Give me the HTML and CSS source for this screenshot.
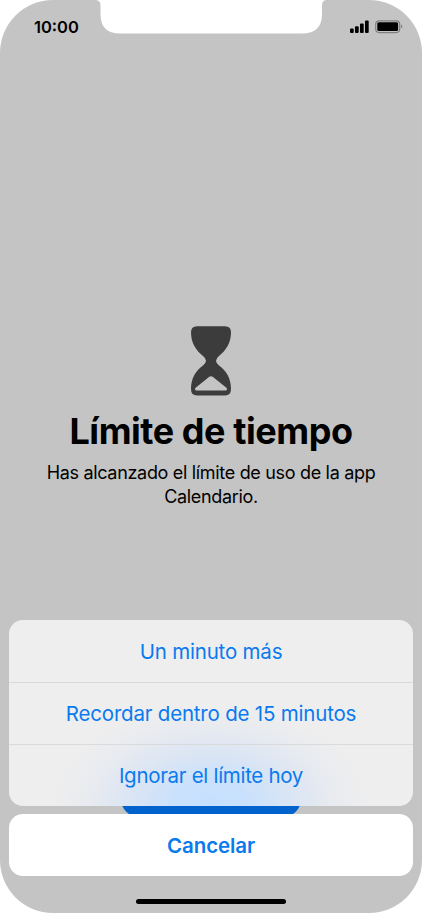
FILE: index.html
```html
<!DOCTYPE html>
<html lang="es">
<head>
<meta charset="utf-8">
<title>Límite de tiempo</title>
<link rel="stylesheet" href="styles.css">
</head>
<body>
<div class="phone">
  <svg class="notch" width="230" height="35" viewBox="0 0 230 35"><path fill="#fff" d="M0 0Q4.500 .8 4.500 5V14Q4.500 33.500 24 33.500H206Q226 33.500 226 14V5Q226 .8 230 0Z"/></svg>
  <header class="status">
    <span class="time">10:00</span>
    <svg class="indicators" width="53" height="14" viewBox="0 0 53 14">
      <rect x="0" y="8.500" width="3.700" height="4.500" rx="1"/>
      <rect x="5" y="6.200" width="3.700" height="6.800" rx="1"/>
      <rect x="10" y="3.500" width="3.700" height="9.500" rx="1"/>
      <rect x="15" y=".5" width="3.700" height="12.500" rx="1"/>
      <rect x="25.700" y=".8" width="24" height="11.800" rx="3.500" fill="none" stroke="#808080" stroke-width="1.200"/>
      <rect x="27.300" y="2.300" width="20.800" height="8.800" rx="1.500"/>
      <path fill="#808080" d="M51 4.600Q52.300 5.200 52.300 6.600T51 8.600Z"/>
    </svg>
  </header>
  <main class="message">
    <svg class="hourglass" width="42" height="70" viewBox="0 0 42 70">
      <path fill="#3c3c3c" fill-rule="evenodd" d="M7 .3H35Q41 .3 41 6.300C41 17 36 24.500 29 30Q26 32.500 26 34.700T29 39.500C36 44.500 41 52 41 63Q41 69.500 35 69.500H7Q1 69.500 1 63C1 52 6 44.500 13 39.500Q16 37 16 34.700T13 30C6 24.500 1 17 1 6.300Q1 .3 7 .3ZM19.300 50.800 5.300 62Q4.500 64.500 6.500 64.500H35.500Q37.500 64.500 36.700 62L22.700 50.800Q21 49.500 19.300 50.800Z"/>
    </svg>
    <h1 class="title">Límite de tiempo</h1>
    <p class="detail">Has alcanzado el límite de uso de la app<br>Calendario.</p>
  </main>
  <div class="ok-button"></div>
  <footer class="sheet">
    <div class="options">
      <button class="option one">Un minuto más</button>
      <button class="option remind">Recordar dentro de 15 minutos</button>
      <button class="option ignore">Ignorar el límite hoy</button>
    </div>
    <button class="cancel"><span>Cancelar</span></button>
  </footer>
  <div class="home-indicator"></div>
</div>
</body>
</html>
```
FILE: styles.css
```css
* { box-sizing: border-box; }
body { margin: 0; background: #fff; font-family: Inter, "Liberation Sans", sans-serif; }
.phone {
  position: relative;
  display: flex;
  flex-direction: column;
  width: 422px;
  height: 913px;
  overflow: hidden;
  border-radius: 53px;
  background: #c4c4c4;
}
.notch { position: absolute; top: 0; left: 96px; }
.status {
  display: flex;
  justify-content: space-between;
  height: 54px;
  padding: 17px 19px 0 34px;
}
.time { font-size: 16.5px; font-weight: 600; line-height: 20px; }
.indicators { margin-top: 3px; }
.message {
  display: flex;
  flex: 1;
  flex-direction: column;
  align-items: center;
  padding-top: 272px;
  text-align: center;
}
.hourglass { display: block; }
.title { margin: 13px 0 0; font-size: 36px; line-height: 44px; font-weight: 700; letter-spacing: -.44px; white-space: nowrap; }
.detail { margin: 8px 0 0; font-size: 18px; line-height: 24px; letter-spacing: -.32px; white-space: nowrap; }
.ok-button {
  position: absolute;
  left: 121px;
  top: 763px;
  width: 180px;
  height: 54px;
  border-radius: 18px;
  background: #0062cc;
}
.sheet { position: relative; display: flex; flex-direction: column; gap: 8.5px; padding: 0 8.7px; }
button {
  display: block;
  width: 100%;
  padding: 0;
  border: 0;
  background: none;
  color: #0a7aef;
  font-family: inherit;
  font-size: 20.5px;
  text-align: center;
}
.options {
  overflow: hidden;
  border-radius: 14px;
  background: radial-gradient(ellipse 155px 100px at 50% 100%, #c4e0ff 0%, #cae1fc 25%, #dae5f4 52%, #e7eaf0 76%, #eee 100%), #eee;
}
.option { height: 62px; line-height: 62px; letter-spacing: -.2px; }
.one { line-height: 63px; }
.ignore { letter-spacing: -.3px; }
.option + .option { border-top: 1px solid #d9dadc; }
.cancel { height: 62px; border-radius: 14px; background: #fff; font-weight: 600; line-height: 63px; letter-spacing: -.1px; }
.home-indicator { width: 150px; height: 5px; margin: 22.500px auto 9.500px; border-radius: 3px; background: #000; }
```
